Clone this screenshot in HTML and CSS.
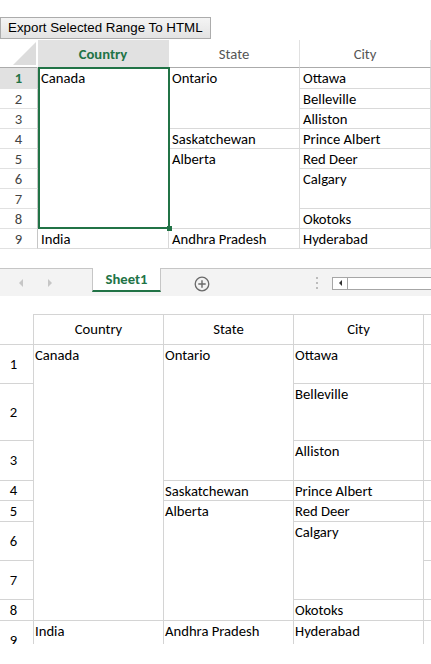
FILE: index.html
```html
<!DOCTYPE html>
<html lang="en">
<head>
<meta charset="utf-8">
<title>Export Selected Range To HTML</title>
<link rel="stylesheet" href="styles.css">
</head>
<body>
<div class="toolbar">
  <button class="export-btn" type="button">Export Selected Range To HTML</button>
</div>

<div class="sheet">
  <table class="grid">
    <colgroup>
      <col class="c-hdr"><col class="c-col"><col class="c-col"><col class="c-col">
    </colgroup>
    <tr class="h-row">
      <th class="corner"><svg class="corner-tri" width="38" height="27" viewBox="0 0 38 27"><polygon points="36,2 36,25 13,25" fill="#dcdcdc"/></svg></th>
      <th class="colhdr sel">Country</th>
      <th class="colhdr">State</th>
      <th class="colhdr">City</th>
    </tr>
    <tr class="row1">
      <th class="rowhdr sel">1</th>
      <td rowspan="8">Canada</td>
      <td rowspan="3">Ontario</td>
      <td>Ottawa</td>
    </tr>
    <tr><th class="rowhdr">2</th><td>Belleville</td></tr>
    <tr><th class="rowhdr">3</th><td>Alliston</td></tr>
    <tr><th class="rowhdr">4</th><td>Saskatchewan</td><td>Prince Albert</td></tr>
    <tr><th class="rowhdr">5</th><td rowspan="4">Alberta</td><td>Red Deer</td></tr>
    <tr><th class="rowhdr">6</th><td rowspan="2">Calgary</td></tr>
    <tr><th class="rowhdr">7</th></tr>
    <tr><th class="rowhdr">8</th><td>Okotoks</td></tr>
    <tr><th class="rowhdr">9</th><td>India</td><td>Andhra Pradesh</td><td>Hyderabad</td></tr>
  </table>
  <div class="selection"><span class="fill-handle"></span></div>
</div>

<div class="tabbar">
  <div class="tabnav">
    <span class="nav-arrow prev"></span>
    <span class="nav-arrow next"></span>
  </div>
  <div class="tab active">Sheet1</div>
  <div class="add-wrap">
    <svg class="add-sheet" width="16" height="16" viewBox="0 0 16 16">
      <circle cx="8" cy="8" r="6.8" fill="none" stroke="#6a6a6a" stroke-width="1.3"/>
      <path d="M8 4.3V11.7M4.3 8H11.7" stroke="#6a6a6a" stroke-width="1.4"/>
    </svg>
  </div>
  <div class="spacer"></div>
  <div class="splitter">
    <svg width="4" height="12" viewBox="0 0 4 12">
      <rect x="1" y="0" width="2" height="2" fill="#bcbcbc"/>
      <rect x="1" y="5" width="2" height="2" fill="#bcbcbc"/>
      <rect x="1" y="10" width="2" height="2" fill="#bcbcbc"/>
    </svg>
  </div>
  <div class="hscroll">
    <span class="hs-btn"><span class="hs-arrow"></span></span>
    <span class="hs-track"></span>
  </div>
</div>

<div class="export-view">
  <table class="out">
    <colgroup>
      <col class="o-hdr"><col class="o-col"><col class="o-col"><col class="o-col"><col class="o-extra">
    </colgroup>
    <tr class="oh">
      <th class="o-corner"></th>
      <th>Country</th>
      <th>State</th>
      <th>City</th>
      <th></th>
    </tr>
    <tr class="h39">
      <th>1</th>
      <td rowspan="8">Canada</td>
      <td rowspan="3">Ontario</td>
      <td>Ottawa</td>
      <td></td>
    </tr>
    <tr class="h57"><th>2</th><td>Belleville</td><td></td></tr>
    <tr class="h40"><th>3</th><td>Alliston</td><td></td></tr>
    <tr class="h20"><th>4</th><td>Saskatchewan</td><td>Prince Albert</td><td></td></tr>
    <tr class="h21"><th>5</th><td rowspan="4">Alberta</td><td>Red Deer</td><td></td></tr>
    <tr class="h39"><th>6</th><td rowspan="2">Calgary</td><td></td></tr>
    <tr class="h39"><th>7</th><td></td></tr>
    <tr class="h21"><th>8</th><td>Okotoks</td><td></td></tr>
    <tr class="h40"><th>9</th><td>India</td><td>Andhra Pradesh</td><td>Hyderabad</td><td></td></tr>
  </table>
</div>
</body>
</html>
```

FILE: styles.css
```css
* { box-sizing: border-box; }

html, body {
  margin: 0;
  padding: 0;
  background: #fff;
}

body {
  width: 431px;
  height: 664px;
  overflow: hidden;
  font-family: Calibri, Carlito, Lato, "Open Sans", sans-serif;
  font-size: 14.67px;
  color: #000;
}

/* ---------- toolbar ---------- */
.toolbar {
  height: 40px;
  padding-top: 17px;
}

.export-btn {
  display: block;
  height: 22px;
  margin: 0;
  padding: 0 7px;
  font-family: "Liberation Sans", Arial, sans-serif;
  font-size: 13.333px;
  line-height: 20px;
  color: #000;
  background: linear-gradient(#f4f4f4, #e3e3e3);
  border: 1px solid #acacac;
  border-radius: 0;
}

/* ---------- spreadsheet ---------- */
.sheet {
  position: relative;
}

.grid {
  border-collapse: separate;
  border-spacing: 0;
  table-layout: fixed;
  width: 431px;
}

.grid col.c-hdr { width: 38px; }
.grid col.c-col { width: 131px; }

.grid th,
.grid td {
  padding: 0;
  border-right: 1px solid #d9d9d9;
  border-bottom: 1px solid #d9d9d9;
  white-space: nowrap;
  overflow: hidden;
}

.grid tr { height: 20px; }
.grid tr.h-row { height: 28px; }
.grid tr.row1 { height: 21px; }

.grid td {
  vertical-align: top;
  padding: 2px 0 0 3px;
  line-height: 17px;
}

.grid .corner {
  vertical-align: top;
  border-bottom-color: #ababab;
  border-right-color: #fff;
}

.corner-tri { display: block; }

.grid .colhdr {
  font-weight: normal;
  color: #555;
  text-align: center;
  vertical-align: middle;
  border-bottom-color: #ababab;
  border-right-color: #e1e1e1;
}

.grid .colhdr.sel {
  background: #e1e1e1;
  color: #217346;
  font-weight: bold;
}

.grid .rowhdr {
  font-weight: normal;
  color: #444;
  text-align: center;
  vertical-align: middle;
  border-right-color: #c6c6c6;
  border-bottom-color: #e1e1e1;
  line-height: 17px;
  padding-top: 1px;
}

.grid .rowhdr.sel {
  background: #e1e1e1;
  color: #217346;
  font-weight: bold;
}

.selection {
  position: absolute;
  left: 38px;
  top: 27px;
  width: 132px;
  height: 162px;
  border: 2px solid #217346;
  pointer-events: none;
}

.fill-handle {
  position: absolute;
  right: -4px;
  bottom: -4px;
  width: 5px;
  height: 5px;
  background: #217346;
}

/* ---------- sheet tab bar ---------- */
.tabbar {
  display: flex;
  align-items: center;
  margin-top: 19px;
  height: 28px;
  background: #f3f3f3;
  border-top: 1px solid #c6c6c6;
}

.tabnav {
  flex: 0 0 92px;
  display: flex;
  align-items: center;
  gap: 25px;
  padding-left: 19px;
}

.nav-arrow {
  width: 0;
  height: 0;
  border-top: 4px solid transparent;
  border-bottom: 4px solid transparent;
}

.nav-arrow.prev { border-right: 4px solid #c6c6c6; }
.nav-arrow.next { border-left: 4px solid #c6c6c6; }

.tab {
  flex: 0 0 69px;
  align-self: flex-start;
  margin-top: -1px;
  height: 24px;
  background: #fff;
  border-left: 1px solid #c6c6c6;
  border-right: 1px solid #c6c6c6;
  border-bottom: 2px solid #217346;
  color: #217346;
  font-weight: bold;
  text-align: center;
  line-height: 23px;
}

.add-wrap {
  flex: 0 0 82px;
  display: flex;
  justify-content: center;
  align-items: center;
  padding-top: 2px;
}

.add-sheet { display: block; }

.spacer { flex: 1 1 auto; }

.splitter {
  flex: 0 0 10px;
  display: flex;
  justify-content: center;
  margin-right: 10px;
  padding-top: 1px;
}

.splitter svg { display: block; }

.hscroll {
  flex: 0 0 99px;
  display: flex;
  height: 13px;
  margin-top: 1px;
  border: 1px solid #a6a6a6;
  border-right: 0;
  background: #fff;
}

.hs-btn {
  flex: 0 0 15px;
  display: flex;
  align-items: center;
  justify-content: center;
  border-right: 1px solid #a6a6a6;
}

.hs-arrow {
  width: 0;
  height: 0;
  border-top: 3px solid transparent;
  border-bottom: 3px solid transparent;
  border-right: 3px solid #333;
}

.hs-track { flex: 1 1 auto; }

/* ---------- exported html table ---------- */
.export-view {
  margin-top: 18px;
  height: 330px;
  overflow: hidden;
}

.out {
  border-collapse: separate;
  border-spacing: 0;
  table-layout: fixed;
  width: 524px;
}

.out col.o-hdr { width: 34px; }
.out col.o-col { width: 130px; }
.out col.o-extra { width: 100px; }

.out th,
.out td {
  padding: 0;
  border-right: 1px solid #d4d4d4;
  border-bottom: 1px solid #d4d4d4;
  white-space: nowrap;
  overflow: hidden;
}

.out tr.oh { height: 31px; }
.out tr.h39 { height: 39px; }
.out tr.h57 { height: 57px; }
.out tr.h40 { height: 40px; }
.out tr.h20 { height: 20px; }
.out tr.h21 { height: 21px; }

.out .oh th {
  border-top: 1px solid #d4d4d4;
  font-weight: normal;
  text-align: center;
  vertical-align: middle;
  padding-bottom: 1px;
}

.out .oh th.o-corner { border-top: 0; }

.out th {
  font-weight: normal;
  text-align: center;
  vertical-align: middle;
  padding-right: 6px;
  line-height: 17px;
}

.out .oh th { padding-right: 0; }

.out td {
  vertical-align: top;
  text-align: left;
  padding: 1px 0 0 1px;
  line-height: 18px;
}
```
